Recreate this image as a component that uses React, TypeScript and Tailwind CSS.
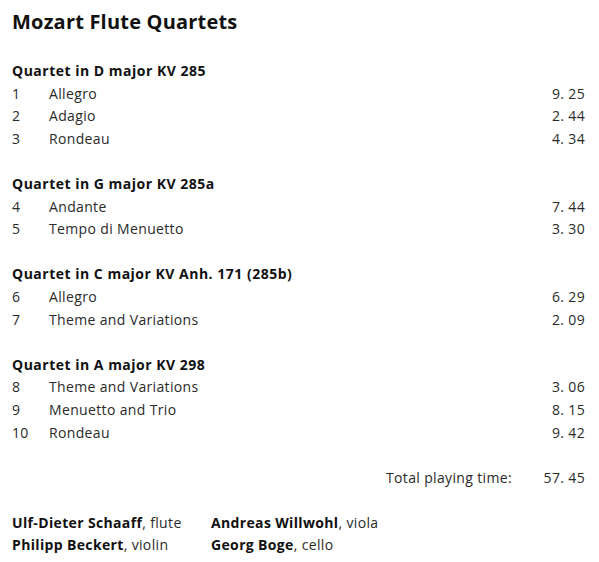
const sections = [
  {
    title: "Quartet in D major KV 285",
    tracks: [
      ["1", "Allegro", "9. 25"],
      ["2", "Adagio", "2. 44"],
      ["3", "Rondeau", "4. 34"],
    ],
  },
  {
    title: "Quartet in G major KV 285a",
    tracks: [
      ["4", "Andante", "7. 44"],
      ["5", "Tempo di Menuetto", "3. 30"],
    ],
  },
  {
    title: "Quartet in C major KV Anh. 171 (285b)",
    tracks: [
      ["6", "Allegro", "6. 29"],
      ["7", "Theme and Variations", "2. 09"],
    ],
  },
  {
    title: "Quartet in A major KV 298",
    tracks: [
      ["8", "Theme and Variations", "3. 06"],
      ["9", "Menuetto and Trio", "8. 15"],
      ["10", "Rondeau", "9. 42"],
    ],
  },
];

export default function App() {
  return (
    <div className="min-h-screen bg-white pl-3 pr-[14px] pt-2 font-['Open_Sans','Noto_Sans',sans-serif] text-[14px] leading-[22.6px] tracking-[0.35px] text-[#2a2a2a]">
      <h1 className="mb-[24px] text-[20px] font-bold leading-7 tracking-[0.2px] text-[#111]">
        Mozart Flute Quartets
      </h1>

      <div className="flex flex-col gap-[22.6px]">
        {sections.map((section) => (
          <section key={section.title}>
            <h2 className="font-bold tracking-[0.5px] text-[#111]">{section.title}</h2>
            {section.tracks.map(([no, name, time]) => (
              <div key={no} className="flex">
                <span className="w-[37px]">{no}</span>
                <span className="flex-1">{name}</span>
                <span>{time}</span>
              </div>
            ))}
          </section>
        ))}

        <div className="flex justify-end">
          <span>Total playing time:</span>
          <span className="w-[73px] text-right">57. 45</span>
        </div>

        <div className="grid grid-cols-[199px_1fr]">
          <p>
            <span className="font-bold text-[#111]">Ulf-Dieter Schaaff</span>, flute
          </p>
          <p>
            <span className="font-bold text-[#111]">Andreas Willwohl</span>, viola
          </p>
          <p>
            <span className="font-bold text-[#111]">Philipp Beckert</span>, violin
          </p>
          <p>
            <span className="font-bold text-[#111]">Georg Boge</span>, cello
          </p>
        </div>
      </div>
    </div>
  );
}
